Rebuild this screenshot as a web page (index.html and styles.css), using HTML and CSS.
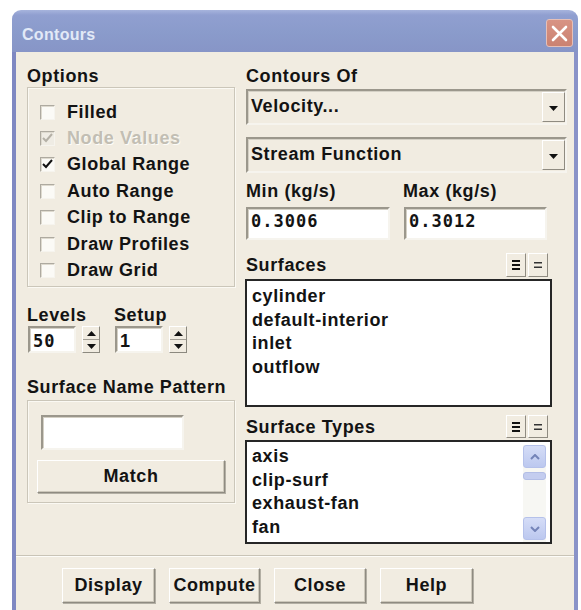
FILE: index.html
```html
<!DOCTYPE html>
<html>
<head>
<meta charset="utf-8">
<title>Contours</title>
<link rel="stylesheet" href="styles.css">
</head>
<body>
<div class="window">
  <div class="titlebar">
    <span class="title">Contours</span>
    <button class="close" aria-label="Close">
      <svg width="17" height="17" viewBox="0 0 17 17"><path d="M2 2 L15 15 M15 2 L2 15" stroke="#fff" stroke-width="2.6" stroke-linecap="round"/></svg>
    </button>
  </div>
  <div class="client">
    <div class="columns">
      <div class="col-left">
        <div class="label">Options</div>
        <div class="group options">
          <label class="check"><span class="box"></span>Filled</label>
          <label class="check disabled"><span class="box"><svg width="13" height="13" viewBox="0 0 13 13"><path d="M2 6 L5 9 L11 2" fill="none" stroke="#b4b0a6" stroke-width="2"/></svg></span>Node Values</label>
          <label class="check"><span class="box"><svg width="13" height="13" viewBox="0 0 13 13"><path d="M2 6 L5 9 L11 2" fill="none" stroke="#111" stroke-width="2"/></svg></span>Global Range</label>
          <label class="check"><span class="box"></span>Auto Range</label>
          <label class="check"><span class="box"></span>Clip to Range</label>
          <label class="check"><span class="box"></span>Draw Profiles</label>
          <label class="check"><span class="box"></span>Draw Grid</label>
        </div>

        <div class="spin-fields">
          <div class="spin-field">
            <div class="label">Levels</div>
            <div class="spin-row">
              <div class="field mono small">50</div>
              <div class="spinner">
                <span class="spin-half"><svg width="9" height="5" viewBox="0 0 9 5"><path d="M0 5 L4.5 0 L9 5 Z" fill="#111"/></svg></span>
                <span class="spin-half"><svg width="9" height="5" viewBox="0 0 9 5"><path d="M0 0 L4.5 5 L9 0 Z" fill="#111"/></svg></span>
              </div>
            </div>
          </div>
          <div class="spin-field second">
            <div class="label">Setup</div>
            <div class="spin-row">
              <div class="field small">1</div>
              <div class="spinner">
                <span class="spin-half"><svg width="9" height="5" viewBox="0 0 9 5"><path d="M0 5 L4.5 0 L9 5 Z" fill="#111"/></svg></span>
                <span class="spin-half"><svg width="9" height="5" viewBox="0 0 9 5"><path d="M0 0 L4.5 5 L9 0 Z" fill="#111"/></svg></span>
              </div>
            </div>
          </div>
        </div>

        <div class="label pattern-label">Surface Name Pattern</div>
        <div class="group pattern">
          <div class="field pattern-input"></div>
          <button class="btn match">Match</button>
        </div>
      </div>

      <div class="col-right">
        <div class="label">Contours Of</div>
        <div class="combo first">
          <span class="combo-text">Velocity...</span>
          <span class="combo-btn"><svg width="9" height="5" viewBox="0 0 9 5"><path d="M0 0 L4.5 5 L9 0 Z" fill="#111"/></svg></span>
        </div>
        <div class="combo second">
          <span class="combo-text">Stream Function</span>
          <span class="combo-btn"><svg width="9" height="5" viewBox="0 0 9 5"><path d="M0 0 L4.5 5 L9 0 Z" fill="#111"/></svg></span>
        </div>

        <div class="range-row">
          <div class="range-field min">
            <div class="label">Min (kg/s)</div>
            <div class="field mono num">0.3006</div>
          </div>
          <div class="range-field max">
            <div class="label">Max (kg/s)</div>
            <div class="field mono num">0.3012</div>
          </div>
        </div>

        <div class="list-head surfaces-head">
          <span class="label">Surfaces</span>
          <span class="tools">
            <span class="tool"><svg width="8" height="10" viewBox="0 0 8 10"><rect x="0" y="0" width="8" height="2" fill="#111"/><rect x="0" y="4" width="8" height="2" fill="#111"/><rect x="0" y="8" width="8" height="2" fill="#111"/></svg></span>
            <span class="tool"><svg width="8" height="6" viewBox="0 0 8 6"><rect x="0" y="0" width="8" height="1.5" fill="#333"/><rect x="0" y="4.5" width="8" height="1.5" fill="#333"/></svg></span>
          </span>
        </div>
        <div class="list surfaces">
          <ul class="items">
            <li>cylinder</li>
            <li>default-interior</li>
            <li>inlet</li>
            <li>outflow</li>
          </ul>
        </div>

        <div class="list-head types-head">
          <span class="label">Surface Types</span>
          <span class="tools">
            <span class="tool"><svg width="8" height="10" viewBox="0 0 8 10"><rect x="0" y="0" width="8" height="2" fill="#111"/><rect x="0" y="4" width="8" height="2" fill="#111"/><rect x="0" y="8" width="8" height="2" fill="#111"/></svg></span>
            <span class="tool"><svg width="8" height="6" viewBox="0 0 8 6"><rect x="0" y="0" width="8" height="1.5" fill="#333"/><rect x="0" y="4.5" width="8" height="1.5" fill="#333"/></svg></span>
          </span>
        </div>
        <div class="list types">
          <ul class="items">
            <li>axis</li>
            <li>clip-surf</li>
            <li>exhaust-fan</li>
            <li>fan</li>
          </ul>
          <div class="scrollbar">
            <span class="sb-btn"><svg width="10" height="6" viewBox="0 0 10 6"><path d="M1 5 L5 1 L9 5" fill="none" stroke="#7484b8" stroke-width="2"/></svg></span>
            <span class="sb-thumb"></span>
            <span class="sb-track"></span>
            <span class="sb-btn"><svg width="10" height="6" viewBox="0 0 10 6"><path d="M1 1 L5 5 L9 1" fill="none" stroke="#7484b8" stroke-width="2"/></svg></span>
          </div>
        </div>
      </div>
    </div>

    <div class="sep"></div>

    <div class="actions">
      <button class="btn act display">Display</button>
      <button class="btn act compute">Compute</button>
      <button class="btn act close-btn">Close</button>
      <button class="btn act help">Help</button>
    </div>
  </div>
</div>
</body>
</html>
```

FILE: styles.css
```css
* {
  box-sizing: border-box;
}

html,
body {
  margin: 0;
  padding: 0;
  background: #ffffff;
}

body {
  font-family: "Liberation Sans", Arial, sans-serif;
  font-weight: bold;
  font-size: 18px;
  letter-spacing: 0.6px;
  color: #131313;
}

button {
  font: inherit;
  letter-spacing: inherit;
  color: inherit;
  padding: 0;
  margin: 0;
}

/* window frame */
.window {
  margin: 10px 0 0 12px;
  width: 566px;
}

.titlebar {
  height: 42px;
  border-radius: 9px 9px 0 0;
  background: linear-gradient(#a7b4dd 0, #909fd0 5px, #8a9bcb 55%, #8795c7 100%);
  display: flex;
  align-items: flex-start;
  justify-content: space-between;
  padding: 0 5px 0 10px;
}

.title {
  margin-top: 15px;
  font-size: 16px;
  line-height: 20px;
  letter-spacing: 0.3px;
  color: #e2e9f7;
}

.close {
  margin-top: 9px;
  width: 27px;
  height: 28px;
  border: 1px solid #e6c0b8;
  border-radius: 3px;
  background: linear-gradient(#d89384, #cb8272);
  display: flex;
  align-items: center;
  justify-content: center;
}

.client {
  height: 570px;
  background: #f1ece1;
  border-left: 4px solid #7f88c2;
  border-right: 4px solid #8a93c8;
  padding: 14px 0 0 11px;
}

.columns {
  display: flex;
  gap: 11px;
}

.col-left {
  width: 208px;
  display: flex;
  flex-direction: column;
}

.col-right {
  width: 321px;
  display: flex;
  flex-direction: column;
}

.label {
  height: 20px;
  line-height: 20px;
  white-space: nowrap;
}

/* etched group boxes */
.group {
  border: 1px solid #cbc6b9;
  box-shadow: inset 1px 1px 0 #fbf9f3, 1px 1px 0 #fbf9f3;
}

.options {
  margin-top: 1px;
  height: 200px;
  padding: 11px 0 0 12px;
}

.check {
  height: 26.4px;
  display: flex;
  align-items: center;
  gap: 12px;
  white-space: nowrap;
}

.check.disabled {
  color: #c2beb3;
  text-shadow: 1px 1px 0 #fdfcf8;
}

.box {
  width: 15px;
  height: 15px;
  flex: none;
  background: #fbfaf6;
  border-top: 1px solid #aeaaa0;
  border-left: 1px solid #aeaaa0;
  border-right: 1px solid #f6f4ee;
  border-bottom: 1px solid #f6f4ee;
  box-shadow: inset 1px 1px 0 #dedacf;
  display: flex;
  align-items: center;
  justify-content: center;
}

.disabled .box {
  background: #efece4;
}

/* sunken entry fields */
.field {
  background: #ffffff;
  border-top: 2px solid #9b978c;
  border-left: 2px solid #9b978c;
  border-right: 2px solid #f6f4ee;
  border-bottom: 2px solid #f6f4ee;
  box-shadow: inset 1px 1px 0 #d4d0c5;
}

.mono {
  font-family: "DejaVu Sans Mono", "Liberation Mono", monospace;
  font-size: 17px;
  letter-spacing: 1px;
}

/* levels / setup spinners */
.spin-fields {
  display: flex;
  margin-top: 18px;
}

.spin-field {
  width: 74px;
  display: flex;
  flex-direction: column;
}

.spin-field.second {
  margin-left: 13px;
}

.spin-row {
  margin-top: 1px;
  height: 27px;
  display: flex;
  gap: 6px;
}

.field.small {
  width: 48px;
  margin-left: 1px;
  padding: 3px 0 0 3px;
  line-height: 20px;
}

.spinner {
  width: 18px;
  display: flex;
  flex-direction: column;
  background: #f1ece1;
  border-top: 1px solid #ffffff;
  border-left: 1px solid #ffffff;
  border-right: 1px solid #8c897f;
  border-bottom: 1px solid #8c897f;
}

.spin-half {
  flex: 1;
  display: flex;
  align-items: center;
  justify-content: center;
}

.spin-half + .spin-half {
  border-top: 1px solid #a29e94;
}

.pattern-label {
  margin-top: 24px;
}

.pattern {
  margin-top: 3px;
  height: 103px;
  padding: 14px 0 0 9px;
}

.pattern-input {
  width: 143px;
  height: 35px;
  margin-left: 4px;
}

/* raised push buttons */
.btn {
  background: #f1ece1;
  border-top: 1px solid #ffffff;
  border-left: 1px solid #ffffff;
  border-right: 1px solid #8f8b81;
  border-bottom: 1px solid #8f8b81;
  box-shadow: inset -1px -1px 0 #cdc8bb, 1px 1px 0 #b3afa4;
  text-align: center;
}

.match {
  display: block;
  margin-top: 10px;
  width: 188px;
  height: 33px;
}

/* combo boxes */
.combo {
  height: 36px;
  display: flex;
  align-items: stretch;
  background: #f1ece1;
  border-top: 2px solid #9b978c;
  border-left: 2px solid #9b978c;
  border-right: 2px solid #f6f4ee;
  border-bottom: 2px solid #f6f4ee;
  box-shadow: inset 1px 1px 0 #d4d0c5;
}

.combo.first {
  margin-top: 3px;
}

.combo.second {
  margin-top: 12px;
}

.combo-text {
  flex: 1;
  padding-left: 3px;
  line-height: 30px;
}

.combo-btn {
  width: 23px;
  margin: 1px 0 1px 0;
  display: flex;
  align-items: center;
  justify-content: center;
  border-top: 1px solid #ffffff;
  border-left: 1px solid #ffffff;
  border-right: 1px solid #8f8b81;
  border-bottom: 1px solid #8f8b81;
}

.combo-btn svg {
  margin-top: 3px;
}

/* min / max */
.range-row {
  margin-top: 8px;
  display: flex;
  gap: 14px;
}

.range-field {
  display: flex;
  flex-direction: column;
}

.range-field.min {
  width: 144px;
}

.range-field.max {
  width: 143px;
}

.range-field.max .label {
  margin-left: -1px;
}

.num {
  margin-top: 6px;
  height: 33px;
  padding: 2px 0 0 3px;
  line-height: 20px;
  font-size: 17px;
}

/* list headers and lists */
.list-head {
  width: 302px;
  display: flex;
  align-items: center;
  justify-content: space-between;
}

.surfaces-head {
  margin-top: 13px;
  height: 24px;
}

.types-head {
  margin-top: 8px;
  height: 23px;
}

.tools {
  display: flex;
  gap: 2px;
  align-self: stretch;
}

.tool {
  width: 20px;
  display: flex;
  align-items: center;
  justify-content: center;
  background: #f1ece1;
  border-top: 1px solid #ffffff;
  border-left: 1px solid #ffffff;
  border-right: 1px solid #8f8b81;
  border-bottom: 1px solid #8f8b81;
}

.list {
  margin: 2px 0 0 -1px;
  width: 307px;
  background: #ffffff;
  border: 2px solid #262626;
  display: flex;
}

.list.surfaces {
  height: 128px;
}

.list.types {
  height: 104px;
}

.items {
  flex: 1;
  list-style: none;
  margin: 0;
  padding: 4px 0 0 5px;
}

.types .items {
  padding-top: 3px;
}

.items li {
  height: 23.6px;
  line-height: 23.6px;
  white-space: nowrap;
}

.scrollbar {
  width: 23px;
  margin: 3px 4px 0 0;
  display: flex;
  flex-direction: column;
  background: #f7f7f3;
}

.sb-btn {
  height: 23px;
  display: flex;
  align-items: center;
  justify-content: center;
  background: linear-gradient(#d5ddf7, #bcc8ef);
  border: 1px solid #b5c1ea;
  border-radius: 3px;
}

.sb-thumb {
  margin-top: 4px;
  height: 8px;
  background: #c4cdef;
  border: 1px solid #b3bee6;
  border-radius: 3px;
}

.sb-track {
  flex: 1;
}

.scrollbar .sb-btn:last-child {
  margin-bottom: 2px;
}

/* bottom separator and actions */
.sep {
  margin: 11px 0 0 -11px;
  height: 2px;
  border-top: 1px solid #c9c4b7;
  border-bottom: 1px solid #fdfcf8;
}

.actions {
  margin: 11px 0 0 35px;
  display: flex;
  gap: 14px;
}

.act {
  height: 35px;
  line-height: 31px;
}

.display {
  width: 93px;
}

.compute {
  width: 91px;
}

.close-btn {
  width: 92px;
}

.help {
  width: 93px;
}
```
